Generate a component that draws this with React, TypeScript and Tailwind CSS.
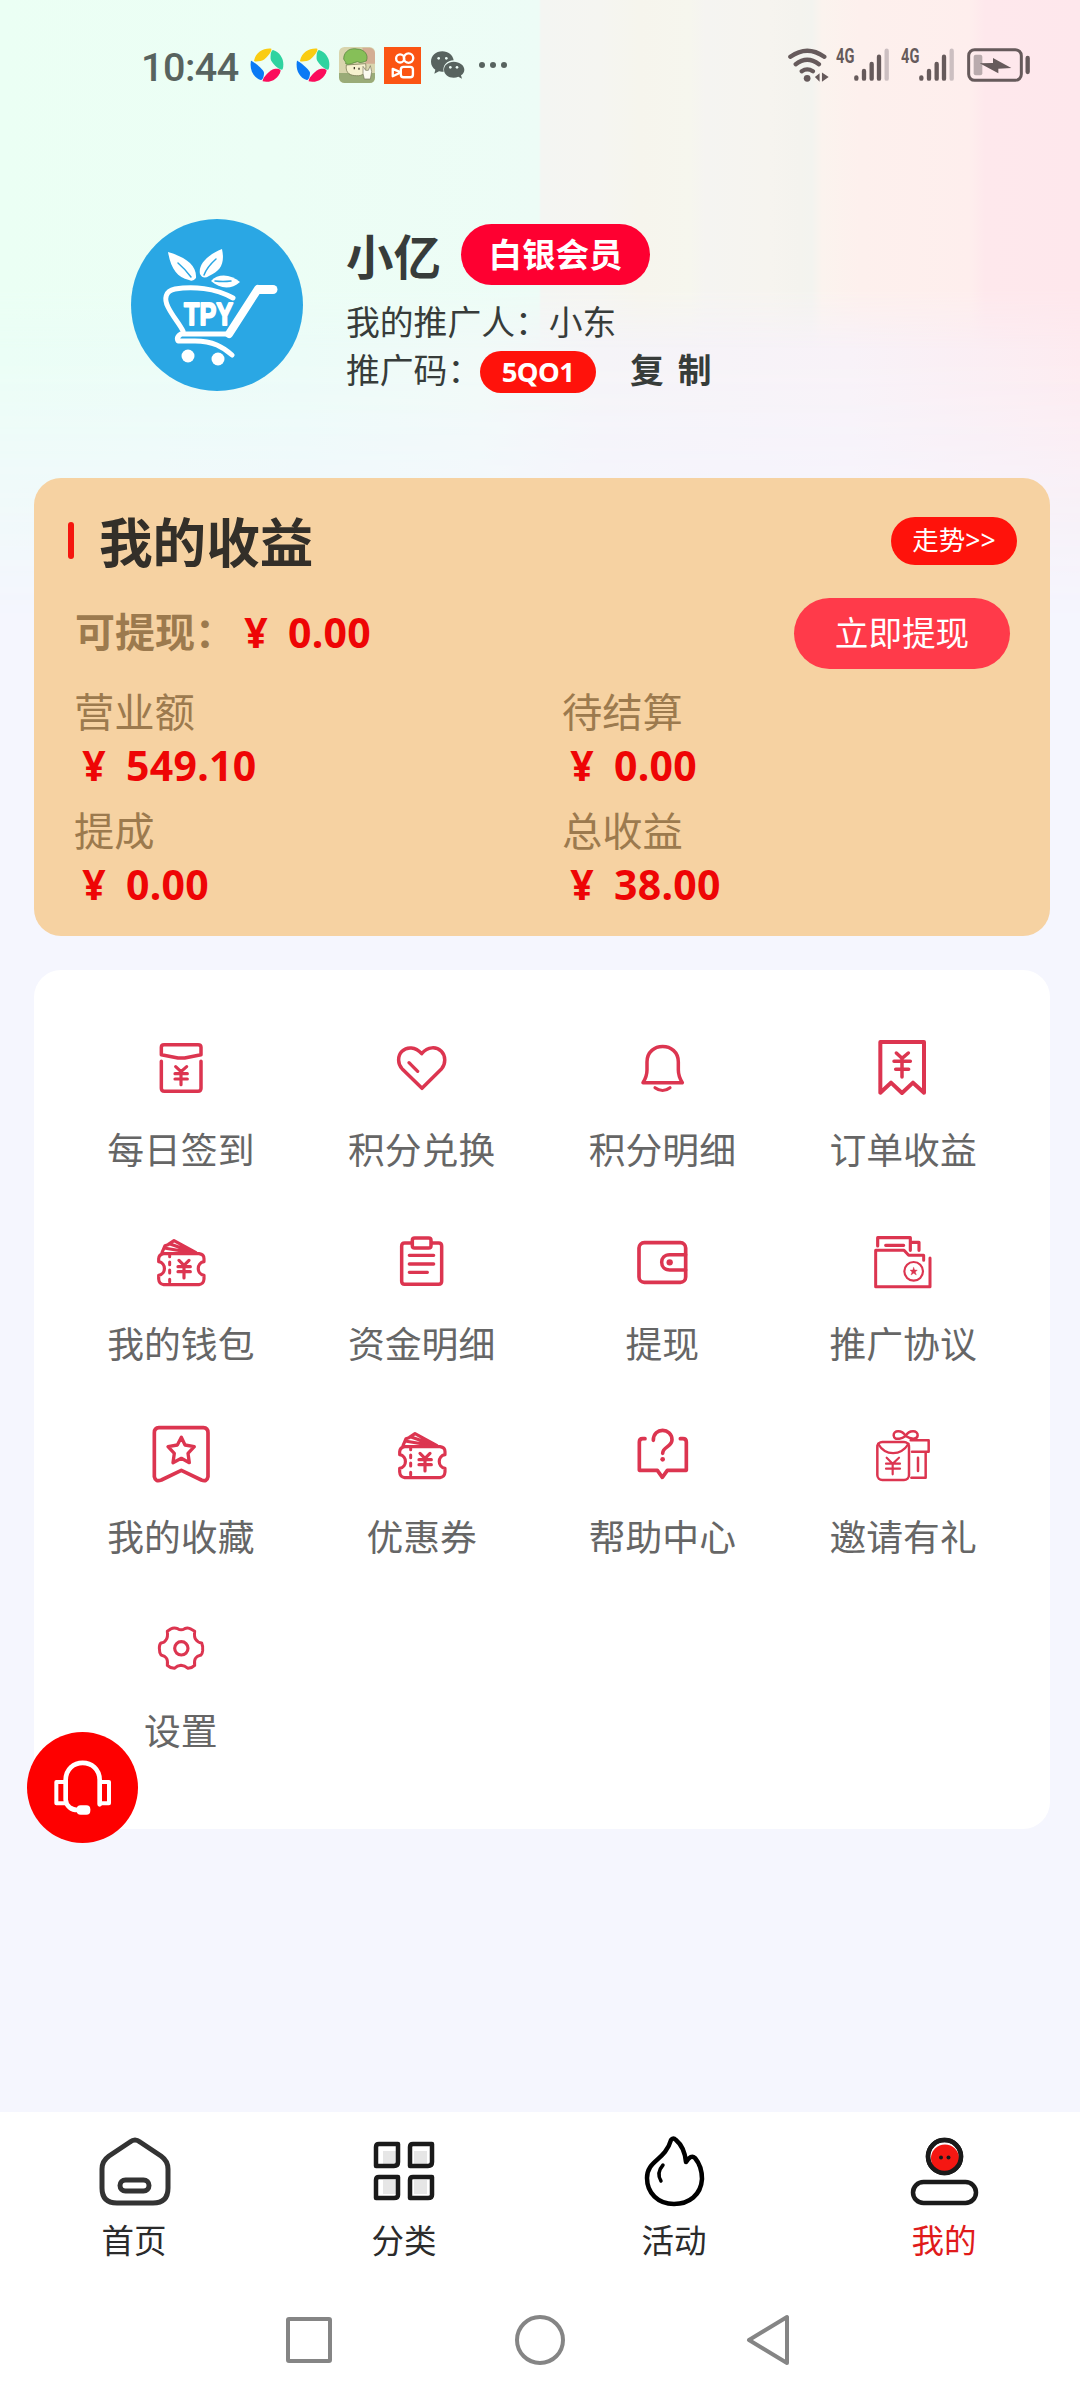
import type { ReactNode } from 'react';

interface MenuItem {
  label: string;
  viewBox: string;
  icon: ReactNode;
}

interface Amount {
  label: string;
  value: string;
}

const amounts: Amount[] = [
  { label: '营业额', value: '549.10' },
  { label: '待结算', value: '0.00' },
  { label: '提成', value: '0.00' },
  { label: '总收益', value: '38.00' },
];

/* Fan of coupons, shared by wallet and coupon entries */
function CouponShape() {
  return (
    <>
      <path d="M216 698L225 677L234 674L252 662L318 698M222 684L312 699M240 672L318 699" strokeWidth="9.5" />
      <path d="M264 682L322 699H290Z" fill="currentColor" strokeWidth="4" />
      <path
        d="M221 701H327Q342 703 342 716V725C319 729 319 762 342 766V777Q341 792 327 794H221Q207 792 206 777V766C229 762 229 729 206 725V716Q207 703 221 701Z"
        strokeWidth="9.5"
      />
      <path d="M239 706V710M239 726V734M239 750V759M239 778V786" strokeWidth="9" />
      <path d="M267 721L282 736L297 721M282 736V774M264 740H301M264 755H301" strokeWidth="9.5" />
    </>
  );
}

const menu: MenuItem[] = [
  {
    label: '每日签到',
    viewBox: '153 21 240 240',
    icon: (
      <>
        <path d="M214 104V82Q214 74 222 74H324Q333 74 333 82V104L284 114H264Z" strokeWidth="10.5" />
        <path d="M214 124V205Q214 214 223 214H324Q333 214 333 205V124" strokeWidth="10.5" />
        <path d="M257 140L273 155L290 140M273 155V194M255 161H292M255 177H292" strokeWidth="9.5" />
      </>
    ),
  },
  {
    label: '积分兑换',
    viewBox: '876 21 240 240',
    icon: (
      <>
        <path d="M996 205L936 146C923 132 922 108 936 94C951 79 976 80 995 101C1014 79 1039 79 1054 94C1068 108 1067 132 1055 146Z" strokeWidth="10.5" />
        <path d="M957 128L983 154" strokeWidth="10" />
      </>
    ),
  },
  {
    label: '积分明细',
    viewBox: '156 21 240 240',
    icon: (
      <>
        <path d="M219 188Q231 169 231 150V126C231 64 325 64 325 126V150Q325 169 337 188Z" strokeWidth="10.5" />
        <path d="M255 203Q278 220 300 203" strokeWidth="9.5" />
      </>
    ),
  },
  {
    label: '订单收益',
    viewBox: '879 21 240 240',
    icon: (
      <>
        <path d="M931 66H1062V218L1029 188L996 219L963 188L931 218Z" strokeWidth="12" />
        <path d="M979 99L996 115L1015 99M996 115V171M972 124H1021M977 148H1016" strokeWidth="10.5" />
      </>
    ),
  },
  { label: '我的钱包', viewBox: '153 603 240 240', icon: <CouponShape /> },
  {
    label: '资金明细',
    viewBox: '876 603 240 240',
    icon: (
      <>
        <path d="M964 669H944Q935 669 935 678V784Q935 793 944 793H1046Q1055 793 1055 784V678Q1055 669 1046 669H1026" strokeWidth="10.5" />
        <rect x="967" y="654" width="56" height="30" rx="7" strokeWidth="10.5" />
        <path d="M958 706H1031M958 732H1031M958 757H1012" strokeWidth="10" />
      </>
    ),
  },
  {
    label: '提现',
    viewBox: '156 603 240 240',
    icon: (
      <>
        <rect x="207" y="668" width="140" height="119" rx="16" strokeWidth="11" />
        <path d="M347 704H299C267 704 267 750 299 750H347" strokeWidth="10.5" />
        <circle cx="299" cy="727" r="9.5" fill="currentColor" stroke="none" />
      </>
    ),
  },
  {
    label: '推广协议',
    viewBox: '879 603 240 240',
    icon: (
      <>
        <path d="M923 678V653H1021V691M1027 667H1047V691M947 676H1001" strokeWidth="9.5" />
        <path d="M1080 714V800H917V691H1002L1016 706H1061V721" strokeWidth="9" />
        <circle cx="1031" cy="754" r="28" strokeWidth="6.5" />
        <path d="M1031 742L1034 750L1042 750L1036 756L1039 765L1031 760L1023 765L1026 756L1020 750L1028 750Z" fill="currentColor" strokeWidth="1" />
      </>
    ),
  },
  {
    label: '我的收藏',
    viewBox: '153 45 240 240',
    icon: (
      <>
        <path d="M207 86H340Q354 87 354 101V233Q351 250 334 243L274 214L214 243Q196 250 193 233V101Q193 87 207 86Z" strokeWidth="11" />
        <path d="M274 115L285 138L313 143L294 163L298 191L274 178L249 191L253 163L234 143L262 138Z" strokeWidth="10" />
      </>
    ),
  },
  {
    label: '优惠券',
    viewBox: '153 603 240 240',
    icon: <CouponShape />,
  },
  {
    label: '帮助中心',
    viewBox: '156 45 240 240',
    icon: (
      <>
        <path d="M225 119H218Q208 119 208 129V214H262L277 235L292 214H349V129Q349 119 339 119H331" strokeWidth="11" />
        <path d="M250 124C250 83 306 86 306 122C306 144 278 143 278 163" strokeWidth="11" />
        <circle cx="278" cy="181" r="7" fill="currentColor" stroke="none" />
      </>
    ),
  },
  {
    label: '邀请有礼',
    viewBox: '879 45 240 240',
    icon: (
      <>
        <rect x="922" y="129" width="95" height="114" rx="15" strokeWidth="7.5" />
        <path d="M924 134C946 172 992 172 1016 134" strokeWidth="6.5" />
        <path d="M950 176L968 194L987 176M968 194V226M948 194H990M948 209H990" strokeWidth="6.5" />
        <path d="M1007 111C995 91 970 94 971 109C972 120 979 120 988 119C996 118 1001 115 1007 111C1018 91 1044 94 1043 109C1042 122 1024 122 1007 111ZM1022 124H1076V158H1026M1067 160V236H1024M1044 176V216" strokeWidth="7.5" />
      </>
    ),
  },
  {
    label: '设置',
    viewBox: '153 627 240 240',
    icon: (
      <>
        <path
          d="M263 689Q273 696 284 689Q294 684 304 691L314 697Q312 714 317 721Q323 731 335 732Q339 740 338 755Q337 765 333 768Q321 771 317 777Q312 784 314 799Q306 807 294 808Q284 800 273 799Q262 800 253 808Q240 807 232 799Q234 784 229 777Q225 771 213 768Q208 761 208 748Q208 736 213 732Q224 731 229 721Q234 714 232 697L242 690Q252 684 263 689Z"
          strokeWidth="9"
        />
        <circle cx="274" cy="748" r="20" strokeWidth="9.5" />
      </>
    ),
  },
];

function PinwheelIcon() {
  return (
    <svg viewBox="0 0 102 102" className="h-[34px] w-[34px]">
      <path d="M12 38C18 12 40 0 64 2C68 10 44 38 32 39C24 40 14 42 12 38Z" fill="#facc12" />
      <path d="M69 6C94 14 105 40 98 64C88 70 64 44 62 34C61 24 62 8 69 6Z" fill="#2fd3a0" />
      <path d="M3 38C8 38 42 66 42 74C42 86 38 96 32 96C8 88-2 62 3 38Z" fill="#0b7af5" />
      <path d="M92 68C86 92 62 106 38 100C36 90 62 64 72 63C82 62 90 62 92 68Z" fill="#fb0d5b" />
    </svg>
  );
}

function CartoonIcon() {
  return (
    <svg viewBox="0 0 108 108" className="h-9 w-9">
      <rect width="108" height="108" rx="16" fill="#d9d5ae" />
      <path d="M0 78H108V92Q106 108 92 108H16Q2 106 0 92Z" fill="#9aab78" />
      <path d="M70 2H92Q106 4 108 18V50H80Z" fill="#d3ad93" />
      <path d="M22 54C18 80 36 86 52 86C72 88 84 76 80 50Z" fill="#f6f1cf" stroke="#6a6b45" strokeWidth="2" />
      <path d="M14 36C14 10 38 2 54 6C76 6 90 24 82 42C74 44 66 50 56 44C44 46 30 56 20 50C22 44 16 42 14 36Z" fill="#86bf58" stroke="#4d7a38" strokeWidth="2" />
      <path d="M46 60V67M60 62V68" stroke="#3d3a2a" strokeWidth="4" />
      <path d="M72 58L80 70H88L94 56L98 74L94 96H76L72 80Z" fill="#fbfaf0" stroke="#77745b" strokeWidth="2" />
    </svg>
  );
}

function CameraIcon() {
  return (
    <svg viewBox="0 0 110 110" className="h-[37px] w-[37px]" fill="none" stroke="#fff" strokeWidth="7" strokeLinejoin="round">
      <rect width="110" height="110" fill="#fb5413" stroke="none" />
      <circle cx="48" cy="34" r="12" />
      <circle cx="73" cy="33" r="14" />
      <rect x="50" y="59" width="36" height="31" rx="8" />
      <path d="M26 65L45 73V78L26 87Z" />
    </svg>
  );
}

function ChatIcon() {
  return (
    <svg viewBox="0 0 102 84" className="h-7 w-[34px]">
      <path d="M34 1C14 1 0 15 0 32C0 42 5 50 13 56L10 68L24 61Q30 63 38 62C34 44 48 28 68 28C65 12 52 1 34 1Z" fill="#58635f" />
      <path d="M68 32C51 32 39 43 39 56C39 70 52 80 68 80Q76 80 82 77L93 83L90 73C97 69 100 62 100 56C100 43 86 32 68 32Z" fill="#58635f" />
      <circle cx="23" cy="22" r="4" fill="#edfcf6" />
      <circle cx="46" cy="22" r="4" fill="#edfcf6" />
      <circle cx="58" cy="49" r="4" fill="#edfcf6" />
      <circle cx="78" cy="49" r="4" fill="#edfcf6" />
    </svg>
  );
}

function SignalIcon() {
  return (
    <div className="flex w-[53px] shrink-0 items-start">
      <svg viewBox="0 0 120 120" className="-mt-[10px] h-10 w-10 shrink-0">
        <text x="0" y="75" textLength="55" lengthAdjust="spacingAndGlyphs" className="fill-[#665a5b] font-[Roboto] text-[62px] font-bold">
          4G
        </text>
      </svg>
      <svg viewBox="0 0 105 102" className="-ml-[22px] h-[34px] w-[35px] shrink-0" stroke="#665a5b" strokeLinecap="round" strokeWidth="13">
        <path d="M7 88V92M30 69V92M53 48V92M75 26V92" />
        <path d="M98 8V92" stroke="#ccbfc1" />
      </svg>
    </div>
  );
}

function StatusBar() {
  return (
    <div className="flex h-[130px] shrink-0 items-center pl-[141px]">
      <span className="mt-[6px] w-[109px] whitespace-nowrap font-[Roboto] text-[39.5px] font-medium leading-[44px] tracking-[-0.5px] text-[#58635f]">
        10:44
      </span>
      <PinwheelIcon />
      <div className="ml-3">
        <PinwheelIcon />
      </div>
      <div className="ml-[9px]">
        <CartoonIcon />
      </div>
      <div className="ml-[9px]">
        <CameraIcon />
      </div>
      <div className="ml-[10px]">
        <ChatIcon />
      </div>
      <div className="ml-[14px] flex gap-[5px]">
        <span className="h-[6px] w-[6px] rounded-full bg-[#58635f]" />
        <span className="h-[6px] w-[6px] rounded-full bg-[#58635f]" />
        <span className="h-[6px] w-[6px] rounded-full bg-[#58635f]" />
      </div>
      <svg viewBox="0 0 122 104" className="ml-[281px] h-[35px] w-[41px]" fill="none" stroke="#665a5b" strokeWidth="13" strokeLinecap="round">
        <path d="M7 26Q57-10 108 26M23 48Q57 22 92 48M41 69Q57 58 74 69" />
        <circle cx="57" cy="90" r="10" fill="#665a5b" stroke="none" />
        <path d="M80 86L94 75V100ZM101 73L121 86L101 100Z" fill="#665a5b" stroke="none" />
      </svg>
      <div className="ml-[7px]">
        <SignalIcon />
      </div>
      <div className="ml-[12px]">
        <SignalIcon />
      </div>
      <svg viewBox="0 0 192 102" className="ml-[13px] h-[34px] w-16" fill="none">
        <rect x="5" y="5" width="158" height="92" rx="18" stroke="#665a5b" strokeWidth="9" />
        <rect x="20" y="20" width="26" height="62" rx="6" fill="#b9abad" />
        <path d="M38 46L78 45V30L133 60L94 62V76Z" fill="#665a5b" />
        <path d="M182 30V72" stroke="#665a5b" strokeWidth="13" strokeLinecap="round" />
      </svg>
    </div>
  );
}

function Avatar() {
  return (
    <svg viewBox="0 0 172 172" className="h-[172px] w-[172px] shrink-0" fill="none" stroke="#fff" strokeLinecap="round" strokeLinejoin="round">
      <circle cx="86" cy="86" r="86" fill="#2aa7e4" stroke="none" />
      <path d="M37 33C54 38 66 46 65 59Q62 63 58 61C46 58 40 50 37 33Z" fill="#fff" stroke="none" />
      <path d="M91 30C76 36 67 46 69 55Q72 61 78 57C90 52 94 44 91 30Z" fill="#fff" stroke="none" />
      <path d="M80 62C87 54 100 55 109 63C100 71 89 70 80 62Z" fill="#fff" stroke="none" />
      <path d="M47 44Q54 50 60 58M85 40Q76 48 73 56M84 62Q92 63 100 62" stroke="#2aa7e4" strokeWidth="1.5" />
      <path d="M102 79C84 69 62 67 44 70C34 72 33 80 37 88C42 98 48 104 52 112" strokeWidth="5" />
      <path d="M127 70L98 115H50Q45 118 47 122H64C82 122 92 128 101 136" strokeWidth="5" />
      <path d="M127 70L98 115" strokeWidth="8" />
      <path d="M142 70.5H128" strokeWidth="9" />
      <circle cx="57" cy="137" r="6.5" fill="#fff" stroke="none" />
      <circle cx="87" cy="140" r="6.5" fill="#fff" stroke="none" />
      <text
        x="53"
        y="106"
        textLength="49"
        lengthAdjust="spacingAndGlyphs"
        strokeWidth="1.8"
        className="fill-white font-['Liberation_Sans'] text-[31px] font-bold"
      >
        TPY
      </text>
    </svg>
  );
}

function Profile() {
  return (
    <section className="flex h-[348px] shrink-0 gap-[43px] pl-[131px] pt-[89px] text-[#373c3a]">
      <Avatar />
      <div className="pt-[5px]">
        <div className="flex h-[61px] items-center">
          <h1 className="mt-[5px] w-[115px] text-[47.5px] font-bold leading-[56px]">小亿</h1>
          <span className="flex h-[61px] w-[189px] items-center justify-center rounded-full bg-[#fe0031] text-[33.5px] font-bold text-white">
            白银会员
          </span>
        </div>
        <p className="mt-[15px] whitespace-nowrap text-[33.8px] leading-[44px]">我的推广人：小东</p>
        <div className="mt-[7px] flex h-[42px] items-center text-[33.8px]">
          <span className="-mt-[3px] w-[134px] whitespace-nowrap">推广码：</span>
          <span className="flex h-[42px] w-[116px] items-center justify-center rounded-full bg-[#ff120b] text-[27.5px] font-bold tracking-[-0.6px] text-white">
            5QO1
          </span>
          <button className="-mt-[3px] ml-[34px] flex gap-[14px] font-bold">
            <span>复</span>
            <span>制</span>
          </button>
        </div>
      </div>
    </section>
  );
}

function Money({ value }: { value: string }) {
  return (
    <span className="flex text-[41px] font-bold leading-[52px] text-[#ee0505]">
      <span className="w-10 text-center">¥</span>
      <span className="ml-[12px] tracking-[0.3px]">{value}</span>
    </span>
  );
}

function EarningsCard() {
  return (
    <section className="ml-[34px] h-[458px] w-[1016px] shrink-0 rounded-[27px] bg-[#f6d2a2] pt-[39px]">
      <div className="flex h-[52px] items-start pl-[34px] pr-[33px]">
        <span className="mt-[5px] h-[37px] w-[6px] rounded-full bg-[#f5160f]" />
        <h2 className="ml-[25px] flex-1 text-[53.6px] font-bold leading-[52px] text-[#332f29]">我的收益</h2>
        <span className="flex h-12 w-[126px] items-center justify-center rounded-full bg-[#ff120b] text-[26.5px] text-white">走势&gt;&gt;</span>
      </div>
      <div className="mt-[29px] flex h-[71px] items-center pl-[41px] pr-[40px]">
        <span className="-mt-[4px] w-[161px] text-[40px] font-bold text-[#9c7a4e]">可提现：</span>
        <div className="-mt-[4px] flex-1">
          <Money value="0.00" />
        </div>
        <button className="h-[71px] w-[216px] rounded-full bg-[#ff3a4a] text-[33.6px] text-white">立即提现</button>
      </div>
      <div className="mt-[17px] grid grid-cols-[488px_1fr] gap-y-[14px] pl-[40px]">
        {amounts.map((a) => (
          <div key={a.label}>
            <p className="-mt-px text-[40.3px] leading-[54px] text-[#9c7a4e]">{a.label}</p>
            <Money value={a.value} />
          </div>
        ))}
      </div>
    </section>
  );
}

function MenuCard() {
  return (
    <section className="ml-[34px] mt-[34px] h-[859px] w-[1016px] shrink-0 rounded-[27px] bg-white px-[26.5px] pt-[57px]">
      <div className="grid grid-cols-4 gap-y-[50.6px]">
        {menu.map((item) => (
          <div key={item.label} className="flex flex-col items-center">
            <svg
              viewBox={item.viewBox}
              className="h-20 w-20 text-[#dc3550]"
              fill="none"
              stroke="currentColor"
              strokeLinecap="round"
              strokeLinejoin="round"
            >
              {item.icon}
            </svg>
            <span className="mt-[23px] text-[36.8px] leading-[40px] text-[#666]">{item.label}</span>
          </div>
        ))}
      </div>
    </section>
  );
}

function SupportButton() {
  return (
    <button className="absolute left-[27px] top-[1732px] h-[111px] w-[111px] rounded-full bg-[#fe0000]">
      <svg viewBox="80 95 333 333" className="h-full w-full" fill="none" stroke="#fff">
        <path d="M196 245H168V309H196M298 245H326V309H298" strokeWidth="12" strokeLinejoin="round" />
        <path d="M298 312V240C298 170 196 170 196 240V298C197 318 214 329 232 329" strokeWidth="14" strokeLinecap="round" />
        <rect x="229" y="315" width="41" height="28" rx="12" fill="#fff" stroke="none" />
      </svg>
    </button>
  );
}

const tabs = [
  {
    label: '首页',
    icon: (
      <g stroke="#333" strokeWidth="5">
        <path d="M35 11Q40 7 45 11L66 25Q73 30 73 38V57Q73 72 58 72H22Q7 72 7 57V38Q7 30 14 25Z" />
        <rect x="25" y="49" width="29" height="11" rx="5.5" />
      </g>
    ),
  },
  {
    label: '分类',
    icon: (
      <g stroke="#1a1a1a" strokeWidth="4.5">
        <path d="M18 20H31V34H18ZM49 20H62V34H49ZM18 49H31V63H18ZM49 49H62V63H49Z" fill="#e6e6e6" stroke="none" />
        <path d="M14 13H33V31Q33 35 29 35H11V16Q11 13 14 13ZM48 13H67V31Q67 35 63 35H45V16Q45 13 48 13ZM14 46H33V64Q33 67 29 67H11V49Q11 46 14 46ZM48 46H67V64Q67 67 63 67H45V49Q45 46 48 46Z" />
      </g>
    ),
  },
  {
    label: '活动',
    icon: (
      <g stroke="#000" strokeWidth="4.5">
        <path d="M36 9Q38 6 41 9C47 14 50 21 51 31Q56 23 60 27C65 33 67 41 67 48C66 64 54 73 39 73C23 73 12 62 12 47C12 29 30 30 36 9Z" />
        <path d="M28 34Q21 42 26 50" strokeWidth="3.5" />
      </g>
    ),
  },
  {
    label: '我的',
    active: true,
    icon: (
      <g stroke="#1a1a1a" strokeWidth="4.5">
        <circle cx="39.5" cy="25.5" r="16.5" fill="#fff" />
        <circle cx="40" cy="27.5" r="14" fill="#f51712" stroke="none" />
        <circle cx="39.5" cy="25.5" r="16.5" />
        <circle cx="36" cy="26.5" r="2" fill="#1a1a1a" stroke="none" />
        <circle cx="43.5" cy="26.5" r="2" fill="#1a1a1a" stroke="none" />
        <rect x="8" y="51" width="63" height="21" rx="10.5" />
      </g>
    ),
  },
];

function TabBar() {
  return (
    <nav className="h-[288px] shrink-0 bg-white pt-[19px]">
      <div className="grid grid-cols-4">
        {tabs.map((tab) => (
          <div key={tab.label} className="flex flex-col items-center">
            <svg viewBox="0 0 80 80" className="h-20 w-20" fill="none" strokeLinecap="round" strokeLinejoin="round">
              {tab.icon}
            </svg>
            <span className={`mt-[10px] pr-[2px] text-[32.5px] leading-[40px] ${tab.active ? 'text-[#e01b1b]' : 'text-[#2b2b2b]'}`}>
              {tab.label}
            </span>
          </div>
        ))}
      </div>
      {/* System navigation */}
      <div className="mt-[53px] flex items-center pl-[286px]">
        <span className="h-[46px] w-[46px] rounded-[3px] border-4 border-[#858585]" />
        <span className="ml-[183px] h-[50px] w-[50px] rounded-full border-4 border-[#858585]" />
        <svg viewBox="0 0 44 52" className="ml-[181px] h-[52px] w-11" fill="none" stroke="#858585" strokeWidth="4" strokeLinejoin="round">
          <path d="M41 3V49L3 26Z" />
        </svg>
      </div>
    </nav>
  );
}

export default function App() {
  return (
    <main
      className="relative flex h-[2400px] w-[1080px] flex-col overflow-hidden bg-[#f5f6fe] font-['Noto_Sans','Noto_Sans_CJK_SC',sans-serif]"
      lang="zh-CN"
    >
      {/* Soft wash that fades into the page, with the banded strip above it */}
      <div className="absolute inset-x-0 top-0 h-[640px] bg-[linear-gradient(90deg,#ebfef6_0px,#ecfcf8_300px,#f1faf8_480px,#f5f4f8_600px,#f8f2f8_850px,#fdebf0_1080px)] [mask-image:linear-gradient(180deg,#000_360px,#0009_460px,transparent_620px)]" />
      <div className="absolute inset-x-0 top-0 h-[380px] bg-[linear-gradient(90deg,#ebfff4_0px,#ecfef5_270px,#edfcf6_539px,#f4f5f2_541px,#f5f5f1_600px,#f6f5ed_640px,#f6f6ee_690px,#f5f4f1_705px,#f6f4ef_770px,#f4f3ee_800px,#f3f3ef_812px,#fbf3ee_822px,#fdf0ed_860px,#feeeed_970px,#fee8ec_985px,#fee7ec_1080px)] [mask-image:linear-gradient(180deg,#000_290px,transparent_350px)]" />
      <div className="relative flex flex-1 flex-col">
        <StatusBar />
        <Profile />
        <EarningsCard />
        <MenuCard />
      </div>
      <TabBar />
      <SupportButton />
    </main>
  );
}
